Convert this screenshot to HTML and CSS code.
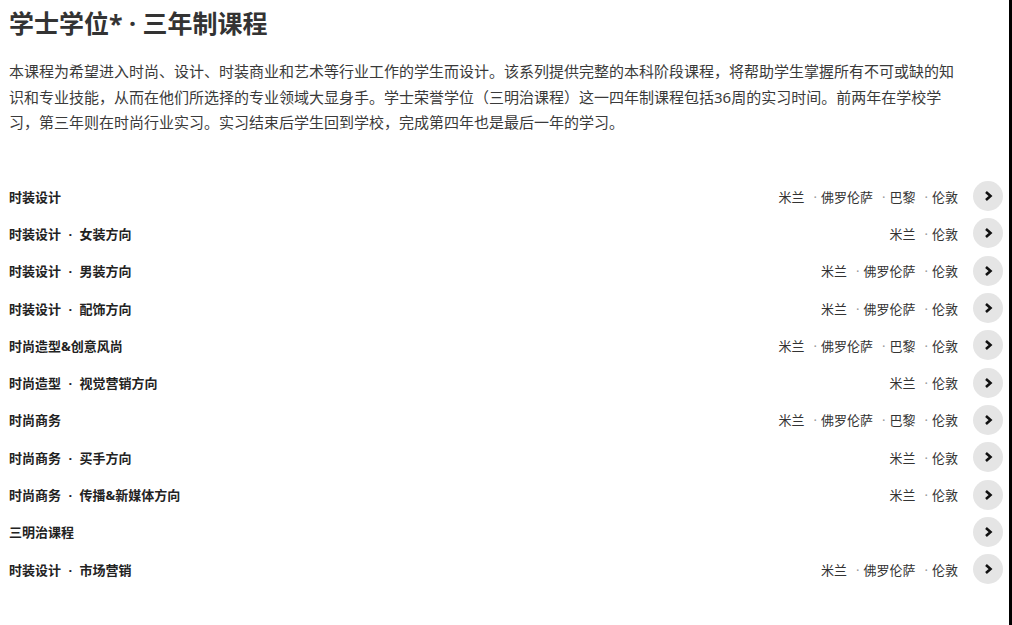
FILE: index.html
```html
<!DOCTYPE html>
<html lang="zh-CN">
<head>
    <meta charset="UTF-8">
    <meta name="viewport" content="width=device-width, initial-scale=1.0">
    <title>学士学位 · 三年制课程</title>
    <link rel="stylesheet" href="styles.css">
</head>
<body>
    <div class="page">
        <h1 class="title">学士学位* · 三年制课程</h1>
        <p class="intro">本课程为希望进入时尚、设计、时装商业和艺术等行业工作的学生而设计。该系列提供完整的本科阶段课程，将帮助学生掌握所有不可或缺的知识和专业技能，从而在他们所选择的专业领域大显身手。学士荣誉学位（三明治课程）这一四年制课程包括36周的实习时间。前两年在学校学习，第三年则在时尚行业实习。实习结束后学生回到学校，完成第四年也是最后一年的学习。</p>

        <ul class="course-list">
            <li class="course">
                <span class="course-name">时装设计</span>
                <span class="cities">米兰<i>·</i>佛罗伦萨<i>·</i>巴黎<i>·</i>伦敦</span>
                <span class="go"><svg viewBox="0 0 14 14"><polyline points="5,3 9.5,7 5,11"/></svg></span>
            </li>
            <li class="course">
                <span class="course-name">时装设计 · 女装方向</span>
                <span class="cities">米兰<i>·</i>伦敦</span>
                <span class="go"><svg viewBox="0 0 14 14"><polyline points="5,3 9.5,7 5,11"/></svg></span>
            </li>
            <li class="course">
                <span class="course-name">时装设计 · 男装方向</span>
                <span class="cities">米兰<i>·</i>佛罗伦萨<i>·</i>伦敦</span>
                <span class="go"><svg viewBox="0 0 14 14"><polyline points="5,3 9.5,7 5,11"/></svg></span>
            </li>
            <li class="course">
                <span class="course-name">时装设计 · 配饰方向</span>
                <span class="cities">米兰<i>·</i>佛罗伦萨<i>·</i>伦敦</span>
                <span class="go"><svg viewBox="0 0 14 14"><polyline points="5,3 9.5,7 5,11"/></svg></span>
            </li>
            <li class="course">
                <span class="course-name">时尚造型&amp;创意风尚</span>
                <span class="cities">米兰<i>·</i>佛罗伦萨<i>·</i>巴黎<i>·</i>伦敦</span>
                <span class="go"><svg viewBox="0 0 14 14"><polyline points="5,3 9.5,7 5,11"/></svg></span>
            </li>
            <li class="course">
                <span class="course-name">时尚造型 · 视觉营销方向</span>
                <span class="cities">米兰<i>·</i>伦敦</span>
                <span class="go"><svg viewBox="0 0 14 14"><polyline points="5,3 9.5,7 5,11"/></svg></span>
            </li>
            <li class="course">
                <span class="course-name">时尚商务</span>
                <span class="cities">米兰<i>·</i>佛罗伦萨<i>·</i>巴黎<i>·</i>伦敦</span>
                <span class="go"><svg viewBox="0 0 14 14"><polyline points="5,3 9.5,7 5,11"/></svg></span>
            </li>
            <li class="course">
                <span class="course-name">时尚商务 · 买手方向</span>
                <span class="cities">米兰<i>·</i>伦敦</span>
                <span class="go"><svg viewBox="0 0 14 14"><polyline points="5,3 9.5,7 5,11"/></svg></span>
            </li>
            <li class="course">
                <span class="course-name">时尚商务 · 传播&amp;新媒体方向</span>
                <span class="cities">米兰<i>·</i>伦敦</span>
                <span class="go"><svg viewBox="0 0 14 14"><polyline points="5,3 9.5,7 5,11"/></svg></span>
            </li>
            <li class="course">
                <span class="course-name">三明治课程</span>
                <span class="cities"></span>
                <span class="go"><svg viewBox="0 0 14 14"><polyline points="5,3 9.5,7 5,11"/></svg></span>
            </li>
            <li class="course">
                <span class="course-name">时装设计 · 市场营销</span>
                <span class="cities">米兰<i>·</i>佛罗伦萨<i>·</i>伦敦</span>
                <span class="go"><svg viewBox="0 0 14 14"><polyline points="5,3 9.5,7 5,11"/></svg></span>
            </li>
        </ul>
    </div>
</body>
</html>
```

FILE: styles.css
```css
* {
    box-sizing: border-box;
}
html {
    background: #fff;
}
body {
    margin: 0;
    font-family: "Noto Sans", "Noto Sans CJK SC", sans-serif;
    color: #333;
}
.page {
    min-height: 625px;
    padding: 6px 6px 0 9px;
    border-right: 3px solid #000;
}
.title {
    margin: 0;
    font-size: 25px;
    line-height: 34px;
    font-weight: bold;
    color: #333;
}
.intro {
    margin: 19px 0 0;
    max-width: 956px;
    font-size: 15px;
    line-height: 25.5px;
    color: #3a3a3a;
}
.course-list {
    list-style: none;
    margin: 42px 0 0;
    padding: 0;
}
.course {
    display: flex;
    align-items: center;
    height: 37.3px;
}
.course-name {
    flex: 1;
    font-size: 13px;
    font-weight: bold;
    color: #222;
    word-spacing: 4px;
}
.cities {
    font-size: 13px;
    color: #333;
    margin-right: 15px;
}
.cities i {
    font-style: normal;
    color: #999;
    margin: 0 4px 0 9px;
}
.go {
    width: 30px;
    height: 30px;
    border-radius: 50%;
    background: #e5e5e5;
    display: flex;
    align-items: center;
    justify-content: center;
}
.go svg {
    width: 14px;
    height: 14px;
    fill: none;
    stroke: #111;
    stroke-width: 2.6;
}
```
